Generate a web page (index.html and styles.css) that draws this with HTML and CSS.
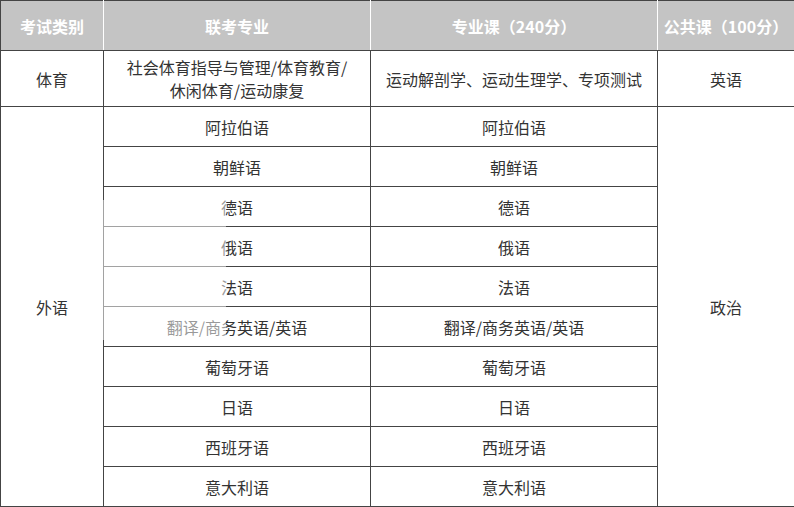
FILE: index.html
```html
<!DOCTYPE html>
<html lang="zh">
<head>
<meta charset="utf-8">
<link rel="stylesheet" href="styles.css">
</head>
<body>
<div class="wrap">
<table class="grid">
  <colgroup>
    <col class="c1"><col class="c2"><col class="c3"><col class="c4">
  </colgroup>
  <thead>
    <tr class="head">
      <th>考试类别</th><th>联考专业</th><th>专业课（240分）</th><th>公共课（100分）</th>
    </tr>
  </thead>
  <tbody>
    <tr class="tall">
      <td>体育</td>
      <td class="two">社会体育指导与管理/体育教育/<br>休闲体育/运动康复</td>
      <td>运动解剖学、运动生理学、专项测试</td>
      <td>英语</td>
    </tr>
    <tr><td rowspan="10">外语</td><td>阿拉伯语</td><td>阿拉伯语</td><td rowspan="10">政治</td></tr>
    <tr><td>朝鲜语</td><td>朝鲜语</td></tr>
    <tr><td>德语</td><td>德语</td></tr>
    <tr><td>俄语</td><td>俄语</td></tr>
    <tr><td>法语</td><td>法语</td></tr>
    <tr><td>翻译/商务英语/英语</td><td>翻译/商务英语/英语</td></tr>
    <tr><td>葡萄牙语</td><td>葡萄牙语</td></tr>
    <tr><td>日语</td><td>日语</td></tr>
    <tr><td>西班牙语</td><td>西班牙语</td></tr>
    <tr><td>意大利语</td><td>意大利语</td></tr>
  </tbody>
</table>
<div class="mark"></div>
</div>
</body>
</html>
```
FILE: styles.css
```css
html, body {
  margin: 0;
  padding: 0;
  background: #ffffff;
}
.wrap {
  position: relative;
  width: 794px;
  height: 507px;
  overflow: hidden;
}
.grid {
  border-collapse: collapse;
  table-layout: fixed;
  width: 794px;
  font-family: "Noto Sans CJK SC", "DejaVu Sans", sans-serif;
  font-size: 16px;
  color: #333333;
}
.c1 { width: 103px; }
.c2 { width: 267px; }
.c3 { width: 287px; }
.c4 { width: 137px; }
.grid td, .grid th {
  border: 1px solid #444444;
  text-align: center;
  vertical-align: middle;
  padding: 0;
  height: 39px;
  line-height: 20px;
  font-weight: normal;
}
.grid .head th {
  background: #c4c4c4;
  color: #ffffff;
  font-weight: bold;
  height: 49px;
  border-left-color: #ffffff;
  border-right-color: #ffffff;
  border-bottom-color: #444444;
  border-top-color: #444444;
}
.grid .head th:first-child { border-left-color: #444444; }
.grid .head th:last-child { border-right-color: #444444; }
.grid .tall td {
  height: 55px;
}
.grid .two {
  line-height: 23px;
}
.mark {
  position: absolute;
  left: 100px;
  top: 200px;
  width: 126px;
  height: 140px;
  background: rgba(255, 255, 255, 0.5);
}
```
